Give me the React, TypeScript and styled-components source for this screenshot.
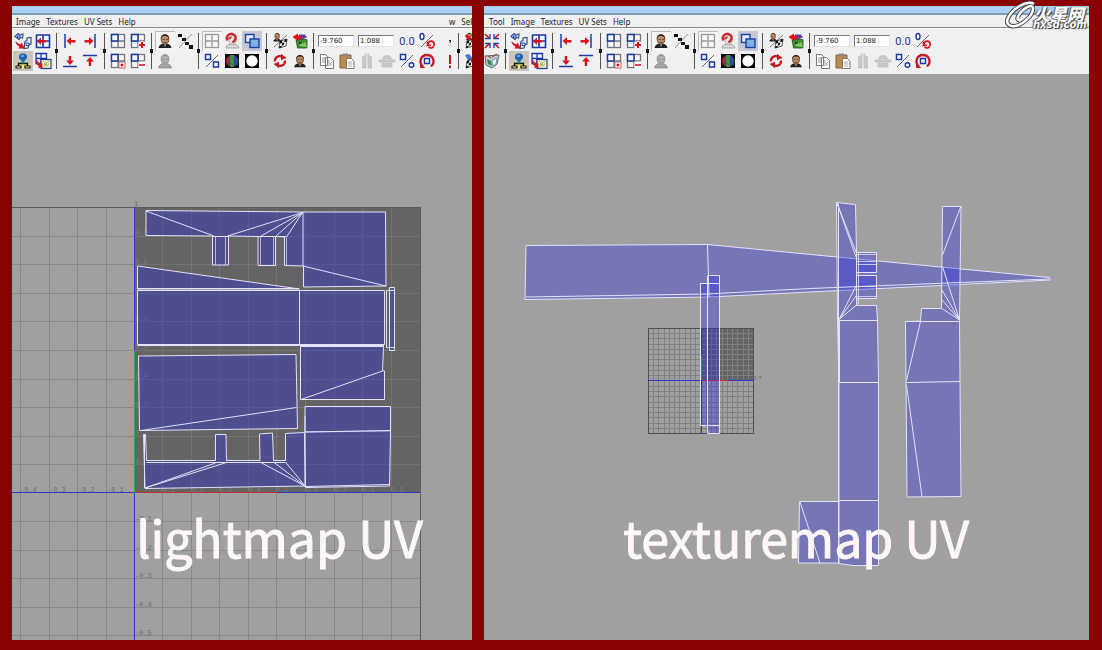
import React from 'react';
import styled, { createGlobalStyle } from 'styled-components';

const GlobalStyle = createGlobalStyle`
  body { margin: 0; background: #8b0000; }
  * { box-sizing: border-box; }
`;

const Page = styled.main`
  display: grid;
  grid-template-columns: 460fr 605fr;
  gap: 12px;
  height: 100vh;
  padding: 6px 13px 10px 12px;
  background: #8b0000;
  position: relative;
  font-family: "Noto Sans", "Open Sans", sans-serif;
`;

const Panel = styled.section`
  display: flex;
  flex-direction: column;
  min-width: 0;
  min-height: 0;
  overflow: hidden;
  background: #f0f0f0;
`;

const TitleStrip = styled.div`
  flex: none;
  height: 9px;
  background: #a9d0f9;
  border-bottom: 2px solid #7f9dbb;
`;

const MenuBar = styled.nav<{ $inset: number }>`
  flex: none;
  display: flex;
  align-items: center;
  gap: 6px;
  height: 13px;
  padding-top: 1px;
  padding-left: ${(p) => p.$inset}px;
  border-bottom: 1px solid #8a8a8a;
  overflow: hidden;
`;

const MenuItem = styled.button`
  flex: none;
  padding: 0;
  border: 0;
  background: none;
  color: #1c1c1c;
  font: 8px/11px "Noto Sans", "Open Sans", sans-serif;
`;

const MenuTail = styled.div`
  display: flex;
  gap: 6px;
  width: 23px;
  margin-left: auto;
  overflow: hidden;
`;

const ToolBar = styled.div`
  flex: none;
  display: flex;
  height: 46px;
  padding: 2px 0 4px;
  border-top: 1px solid #fafafa;
  overflow: hidden;
`;

const Group = styled.div<{ $cols: number }>`
  flex: none;
  display: grid;
  grid-template-columns: repeat(${(p) => p.$cols}, 20px);
  grid-template-rows: 20px 20px;
`;

const Clip = styled.div<{ $width: number; $end?: boolean }>`
  flex: none;
  display: flex;
  width: ${(p) => p.$width}px;
  justify-content: ${(p) => (p.$end ? 'flex-end' : 'flex-start')};
  overflow: hidden;
`;

const Tail = styled.div`
  display: flex;
  margin-left: auto;
`;

const Divider = styled.div<{ $width: number }>`
  flex: none;
  display: flex;
  align-items: center;
  justify-content: center;
  width: ${(p) => p.$width}px;
  background: linear-gradient(#555, #555) center / 1px 36px no-repeat;
  &::after {
    content: "";
    width: 3px;
    height: 4px;
    background: #111;
  }
`;

const Tool = styled.button<{ $frame?: 'light' | 'blue' | 'beige' }>`
  display: block;
  width: 20px;
  height: 20px;
  padding: 0;
  border: 0;
  background: ${(p) =>
    p.$frame === 'blue' ? '#c5c9d6' : p.$frame === 'light' ? '#f5f5f5' : p.$frame === 'beige' ? '#c9c5bd' : 'none'};
  box-shadow: ${(p) => (p.$frame === 'light' ? 'inset 1px 1px 0 #b8b8b8' : 'none')};
  svg { display: block; width: 20px; height: 20px; }
`;

const Field = styled.input`
  grid-column: span 2;
  align-self: center;
  width: 36px;
  height: 12px;
  margin: 0 1px;
  padding: 0 1px;
  border: 1px solid #e4e4e4;
  border-top-color: #777;
  border-left-color: #777;
  background: #fff;
  color: #222;
  font: 7px/10px "DejaVu Sans", sans-serif;
`;

const Canvas = styled.figure`
  position: relative;
  flex: 1;
  min-height: 0;
  margin: 0;
  background: #a0a0a0;
  overflow: hidden;
  > svg { display: block; width: 100%; height: 100%; }
`;

const Caption = styled.figcaption<{ $left: number }>`
  position: absolute;
  left: ${(p) => p.$left}%;
  bottom: 72px;
  color: #fff6f8;
  font: 50px/64px "Noto Sans CJK SC", sans-serif;
  -webkit-text-stroke: 1px #fff6f8;
  white-space: nowrap;
`;

const Brand = styled.div`
  position: absolute;
  top: 0;
  right: 13px;
  display: flex;
  width: 84px;
  height: 30px;
  color: #fff;
  > svg { flex: none; width: 32px; height: 30px; }
`;

const BrandText = styled.div`
  display: flex;
  flex-direction: column;
  padding-top: 7px;
  margin-left: -4px;
  font-family: "Noto Sans CJK SC", sans-serif;
  font-style: italic;
  font-weight: 900;
  text-shadow: 1px 1px 1px #333, 0 0 1px #333, -1px 0 1px #666;
`;

const BrandName = styled.span`
  font-size: 17px;
  line-height: 13px;
`;

const BrandUrl = styled.span`
  font: italic bold 10px/9px "DejaVu Sans", sans-serif;
`;

/* ---------- toolbar icons, drawn on a 20 x 20 field ---------- */

const NAVY = '#1c3aa0';
const RED = '#d8141c';

const Slash = () => <path d="M4 16 16 4" stroke="#666" strokeWidth="1" />;

const Face = ({ grey = false, x = 0, y = 0, s = 1 }: { grey?: boolean; x?: number; y?: number; s?: number }) => (
  <g transform={`translate(${x} ${y}) scale(${s})`}>
    <path d="M3.500 17c.5-3 2-3.500 4.500-4.500h4c2.500 1 4 1.500 4.500 4.500z" fill={grey ? '#a2a2a2' : '#1d1f21'} stroke={grey ? '#888' : 'none'} strokeWidth=".7" />
    <path d="M8 12h4l-2 4z" fill={grey ? '#b5b5b5' : '#cfa07a'} />
    <ellipse cx="10" cy="8.500" rx="3.800" ry="4.800" fill={grey ? '#b0b0b0' : '#c18d66'} stroke={grey ? '#858585' : '#4a2c1a'} strokeWidth=".8" />
    <path d="M5.800 8C5 2 15 2 14.200 8c-1-3-2-3-4.200-3s-3.500 0-4.200 3z" fill={grey ? '#999' : '#23150f'} />
    <path d="M7.500 8.500h2M10.800 8.500h2M8.500 11.500h3" stroke={grey ? '#8c8c8c' : '#4d2a1a'} strokeWidth=".8" />
  </g>
);

const Window = ({ children, grey = false }: { children?: React.ReactNode; grey?: boolean }) => (
  <>
    <rect x="3.500" y="3.500" width="13" height="13" fill="#f7f7f7" stroke={grey ? '#999' : '#70757d'} strokeWidth="1.300" />
    <path d="M10 3.500v13M3.500 10h13" stroke={grey ? '#999' : '#70757d'} strokeWidth="1.300" />
    {!grey && <rect x="3.500" y="3.500" width="6.500" height="6.500" fill="#f4f7ff" stroke={NAVY} strokeWidth="1.500" />}
    {children}
  </>
);

const Checks = ({ x, y, tint = '#111' }: { x: number; y: number; tint?: string }) => (
  <g transform={`translate(${x} ${y})`}>
    <path d="M1 2 8 0 7 7 0 9z" fill="#fff" stroke={tint} strokeWidth=".7" />
    <path d="M1 2l2.300-.7L3 4 .7 4.700zM5.500.700 8 0l-.3 2.500L5.200 3.300zM3 4l2.200-.7L5 6l-2.300.7zM.5 7 2.700 6.700 2.300 8.500 0 9z" fill={tint} />
  </g>
);

const ArrowH = ({ flip = false }: { flip?: boolean }) => (
  <g transform={flip ? 'translate(20 0) scale(-1 1)' : undefined}>
    <path d="M5 3v14" stroke={NAVY} strokeWidth="1.500" />
    <path d="M6.500 10 11 6v3h4.500v2.400H11V14z" fill={RED} />
  </g>
);

const ArrowV = ({ flip = false }: { flip?: boolean }) => (
  <g transform={flip ? 'translate(0 20) scale(1 -1)' : undefined}>
    <path d="M3 15.500h14" stroke={NAVY} strokeWidth="1.500" />
    <path d="M10 14 6 9.500h2.800V5h2.400v4.500H14z" fill={RED} />
  </g>
);

const Cycle = () => (
  <>
    <path d="M5 10.500C4.500 6 9 4 12.500 6" fill="none" stroke="#c51a22" strokeWidth="2.300" />
    <path d="M11 2.800 16.500 7 11 9.300zM9 17.200 3.500 13 9 10.700z" fill="#c51a22" />
    <path d="M15 9.500C15.500 14 11 16 7.500 14" fill="none" stroke="#c51a22" strokeWidth="2.300" />
  </>
);

const ICONS: Record<string, React.ReactNode> = {
  rotate: (
    <>
      <path d="m2 5.500 3-3 2 1.500 3-1-.5 4-2-.5-1.500 2zM12 10.500l2-1V7l4-.5V13l-2 .5-1 3.500-4 .5z" fill="#e6efff" stroke="#2f5092" strokeWidth="1.200" />
      <path d="M13 12h3v2.500h-3zM4.500 5h2.500v2H4.500z" fill="#fff" stroke={NAVY} strokeWidth=".9" />
      <path d="M2.500 10c0 3 2 4.500 4 5.500l-1 2 6.500 0-3.500-6-1.200 2c-2-1-3-1.500-4.800-3.500z" fill={RED} />
    </>
  ),
  flipGrid: (
    <>
      <path d="M3.500 4h13v12.500h-13zM10 4v12.500M3.500 10h13" fill="#eef3ff" stroke={NAVY} strokeWidth="1.600" />
      <path d="M4 10.200 8 6.500V9h5v2.400H8V14z" fill={RED} />
    </>
  ),
  tree: (
    <>
      <path d="M2 12.500h16v5H2z" fill="#f2ec7a" />
      <path d="M10 8v5M5.500 15v-2.500h9V15" fill="none" stroke="#111" strokeWidth="1.600" />
      <path d="M6 4.500 8 2.500h4l2 2v3l-3 2.500H9L6 7.500z" fill="#2263b4" /><path d="M8 4h3v2H8z" fill="#5f9fe4" />
      <path d="M8.500 9.500h3v3h-3z" fill="#1a8a78" />
      <path d="M3 15h5v2H3zM12 15h5v2h-5z" fill="#fff" stroke="#111" strokeWidth="1.200" />
    </>
  ),
  layout: (
    <>
      <path d="M3 2.500h10.500v10H3zM8 2.500v10M3 7.500h10.500" fill="#eef3ff" stroke={NAVY} strokeWidth="1.300" />
      <rect x="8" y="8.500" width="10" height="9" fill="#fbf7c4" stroke={NAVY} strokeWidth="1.200" />
      <path d="m10 10 6 6m0-6-6 6M13 9.500v7M9 13h8" stroke="#8d8340" strokeDasharray="1 1" />
      <path d="m3 10 1 4 2 1-1 2 5-.5-2-5-1.500 1.500L4 9z" fill={RED} />
    </>
  ),
  left: <ArrowH />,
  right: <ArrowH flip />,
  down: <ArrowV />,
  up: <ArrowV flip />,
  win: <Window />,
  winAdd: <Window><path d="M10.500 10.500h7v7h-7z" fill="#fff" /><path d="M14 11v6M11 14h6" stroke={RED} strokeWidth="2" /></Window>,
  winDot: <Window><path d="M11 11h6v6h-6z" fill="#fff" stroke="#c66" /><circle cx="14" cy="14" r="1.500" fill={RED} /></Window>,
  winSub: <Window><path d="M10.500 10.500h7v7h-7z" fill="#fff" /><path d="M11 14h6" stroke={RED} strokeWidth="1.600" /></Window>,
  winGrey: <Window grey />,
  face: <Face />,
  faceSmall: <Face x={1} y={1} s={0.9} />,
  faceGrey: <Face grey />,
  pixels: (
    <>
      <path d="M4 17 17 3" stroke="#999" />
      <path d="M3 3h4v3H3zM7 7h4v3H7zM10 11h4v3h-4zM14 14h4v4h-4z" fill="#111" />
    </>
  ),
  magnet: (
    <>
      <path d="M4 17c0-3 3-3.500 5-4h3c2 .5 4.500 1 5 4z" fill="#d9d9d9" stroke="#999" strokeWidth=".8" />
      <ellipse cx="10.500" cy="9" rx="3.500" ry="4.500" fill="#e3e0dc" stroke="#aaa" strokeWidth=".8" />
      <path d="M5.500 9.500C3 5 8 1.500 11.500 3.500c3.500 2 2.500 6-1 8" fill="none" stroke="#cf262e" strokeWidth="2.400" />
      <path d="m6.500 8 3-2" stroke="#cf262e" strokeWidth="1.600" />
    </>
  ),
  overlap: (
    <>
      <rect x="3.500" y="3.500" width="8.500" height="8" fill="#dfe9fb" stroke={NAVY} strokeWidth="1.400" />
      <rect x="8" y="8" width="9" height="8.500" fill="#7fb0ea" stroke={NAVY} strokeWidth="1.400" />
    </>
  ),
  ratio: (
    <>
      <Slash />
      <path d="M3.500 3.500h5v5h-5zM11.500 11h5v5h-5z" fill="#fff" stroke={NAVY} strokeWidth="1.500" />
    </>
  ),
  rgb: (
    <>
      <path d="M3 3h14v14H3z" fill="#0b0b12" />
      <path d="M9 4.500C2 6 2 14 9 15.500z" fill="#8b3438" /><path d="M8 4h4v12H8z" fill="#3c8a48" /><path d="M12 4.500c6 1.500 6 9.500 0 11z" fill="#2f4c8c" />
    </>
  ),
  mask: <><path d="M3 3h14v14H3z" fill="#050505" /><circle cx="10" cy="10" r="5.700" fill="#fff" /></>,
  faceChecks: <><Face x={1} y={0} s={0.62} /><path d="M4 16 17 4" stroke="#777" /><Checks x={9} y={8} /></>,
  bake: (
    <>
      <path d="M9 3.500h6l2 3-5 2-3-2z" fill="#6b3aa0" />
      <path d="M6 8.500h11v8.500H7.500z" fill="#3c8f35" stroke="#145a1e" strokeWidth=".8" />
      <path d="m9 15 3-4 2 2 1-3 2 6z" fill="#93c46a" /><path d="M9 11h3v1.500H9z" fill="#123f1a" />
      <path d="M2.500 6 8 2.500v2l3 1v3H8v1.500z" fill={RED} />
    </>
  ),
  cycle: <Cycle />,
  zeros: <text x="10" y="14" textAnchor="middle" fontFamily="Roboto, 'Liberation Sans', sans-serif" fontSize="11" fill={NAVY}>0.0</text>,
  resetRatio: (
    <>
      <Slash /><ellipse cx="5" cy="5.500" rx="2" ry="3" fill="none" stroke={NAVY} strokeWidth="1.400" />
      <path d="M10.500 10.500v3.800h3.500M11 13c1-5 7-3 6 1.500-.8 3-4 3-5.500 1.500" fill="none" stroke={RED} strokeWidth="1.700" />
    </>
  ),
  copy: (
    <>
      <path d="M3.500 3.500h5l2 2v9h-7zM8.500 6.500h5l3 3v8h-8z" fill="#fff" stroke="#777" />
      <path d="M5 7h3M5 9h3M5 11h3M10 10h3M10 12h5M10 14h5" stroke="#999" />
    </>
  ),
  paste: (
    <>
      <path d="M3 4h11v13H3z" fill="#b98a52" stroke="#8a6335" /><path d="M6 2.500h5v3H6z" fill="#888" />
      <path d="M9.500 7.500h5l2.500 3v7H9.500z" fill="#fff" stroke="#777" /><path d="M11 11h4M11 13h4M11 15h4" stroke="#aaa" />
    </>
  ),
  mirrorH: <path d="M9 2.500V17H5.500V6L9 4zM11 2.500V17h3.500V6L11 4z" fill="#c9c9c9" stroke="#bbb" strokeWidth=".7" />,
  mirrorV: <path d="M5.500 7.500c1-4 8-4 9 0v.5h-9zM2 9h16v2H2zM5 12h10v4H5z" fill="#c9c9c9" stroke="#bbb" strokeWidth=".7" />,
  squareRound: (
    <>
      <Slash /><path d="M3.500 3.500h5v5h-5z" fill="#fff" stroke={NAVY} strokeWidth="1.500" />
      <circle cx="14.500" cy="14" r="2.300" fill="#fff" stroke={NAVY} strokeWidth="1.400" />
    </>
  ),
  spin: (
    <>
      <path d="M6 15.500C1 11 4 4 10 4s9 7 4 11.500" fill="none" stroke="#c51a22" strokeWidth="2.300" />
      <path d="M3 12.500 8.500 17H3z" fill="#c51a22" /><path d="M7.500 7.500h5v5h-5z" fill="#dfe9fb" stroke={NAVY} strokeWidth="1.400" />
    </>
  ),
  burst: (
    <>
      <path d="M3 3l4.500 4.500M17 3l-4.500 4.500M3 17l4.500-4.500M17 17l-4.500-4.500" stroke={RED} strokeWidth="1.700" />
      <path d="M8 3v4.500H3M12 3v4.500h5M8 17v-4.500H3M12 17v-4.500h5" fill="none" stroke={NAVY} strokeWidth="1.300" />
    </>
  ),
  bucket: (
    <>
      <path d="M3 5 17 4l-2 9-5 4-6-3z" fill="#b9cfd6" stroke="#4c6e72" />
      <path d="m5 8 4 2 1 5-4-2z" fill="#3b8047" /><path d="m10 9 5-2-1 6-3 2z" fill="#e8f0f5" stroke="#55799a" strokeWidth=".7" />
      <path d="m10 6 5-3M6 5l3 2" stroke="#b8433f" strokeWidth="1.400" />
    </>
  ),
  checksRed: <><Face x={2} y={0} s={0.55} /><path d="m4 4 4 5" stroke={RED} strokeWidth="3" /><Checks x={4} y={8} /></>,
  checksBlue: <><path d="m3 4 4-1 5 6-5 2z" fill="#3f78c3" /><Checks x={4} y={8} /><path d="m11 4 3-1" stroke="#2a7050" strokeWidth="2" /></>,
  tick: <path d="M15 9.500h1.500v1.500l-1 1" fill="none" stroke="#111" strokeWidth="1" />,
  bang: <path d="M16 4v9M16 14.500v2.500" stroke="#b8171f" strokeWidth="2" />,
};

type ToolSpec = [icon: string, label: string, frame?: 'light' | 'blue' | 'beige'];

const Icon = ({ spec: [icon, label, frame] }: { spec: ToolSpec }) => (
  <Tool type="button" aria-label={label} $frame={frame}>
    <svg viewBox="0 0 20 20" aria-hidden="true">{ICONS[icon]}</svg>
  </Tool>
);

const GROUPS: { cols: number; gap: number; tools: ToolSpec[] }[] = [
  { cols: 2, gap: 7, tools: [['rotate', 'Rotate shells'], ['flipGrid', 'Flip'], ['tree', 'Unfold', 'beige'], ['layout', 'Layout']] },
  { cols: 2, gap: 8, tools: [['left', 'Align left'], ['right', 'Align right'], ['down', 'Align bottom'], ['up', 'Align top']] },
  { cols: 2, gap: 7, tools: [['win', 'Isolate'], ['winAdd', 'Isolate add'], ['winDot', 'Isolate reset'], ['winSub', 'Isolate remove']] },
  { cols: 2, gap: 7, tools: [['face', 'Show image', 'light'], ['pixels', 'Pixel snap'], ['faceGrey', 'Dim image']] },
  {
    cols: 3, gap: 8, tools: [['winGrey', 'Show grid', 'light'], ['magnet', 'Snap'], ['overlap', 'Shade shells', 'blue'],
      ['ratio', 'Image ratio'], ['rgb', 'RGB channels'], ['mask', 'Alpha channel']],
  },
  { cols: 2, gap: 7, tools: [['faceChecks', 'Toggle texture'], ['bake', 'Bake'], ['cycle', 'Update'], ['faceSmall', 'Use image']] },
];

const Tools = () => (
  <>
    {GROUPS.map((g, i) => (
      <React.Fragment key={i}>
        <Group $cols={g.cols}>{g.tools.map((t) => <Icon key={t[1]} spec={t} />)}</Group>
        <Divider $width={g.gap} />
      </React.Fragment>
    ))}
    <Group $cols={6}>
      <Field aria-label="U coordinate" defaultValue="-9.760" />
      <Field aria-label="V coordinate" defaultValue="1.088" />
      <Icon spec={['zeros', 'Refresh values']} />
      <Icon spec={['resetRatio', 'Reset ratio']} />
      <Icon spec={['copy', 'Copy']} />
      <Icon spec={['paste', 'Paste']} />
      <Icon spec={['mirrorH', 'Paste U']} />
      <Icon spec={['mirrorV', 'Paste V']} />
      <Icon spec={['squareRound', 'Copy mode']} />
      <Icon spec={['spin', 'Cycle UVs']} />
    </Group>
  </>
);

const MENUS = ['Image', 'Textures', 'UV Sets', 'Help'];

/* ---------- UV drawings ---------- */

const SHELL = 'rgba(37,37,230,.333)';
const EDGE = '#e2e2fa';
const range = (n: number) => Array.from({ length: n }, (_, i) => i);

const LightmapDrawing = () => (
  <svg viewBox="12 74 460 566" preserveAspectRatio="xMinYMin slice" role="img" aria-label="Lightmap UV layout">
    <rect x="134" y="207" width="286" height="286" fill="#646464" />
    <g stroke="#888" strokeWidth="1" shapeRendering="crispEdges">
      {range(4).map((i) => <path key={i} d={`M${Math.round(20 + i * 28.6)}.5 207V640`} />)}
      {range(9).map((i) => <path key={i} d={`M${Math.round(162 + i * 28.6)}.5 493V640`} />)}
      {range(9).map((i) => <path key={i} d={`M12 ${Math.round(235.600 + i * 28.6)}.5H134`} />)}
      {range(5).map((i) => <path key={i} d={`M12 ${Math.round(521 + i * 28.6)}.5H420`} />)}
    </g>
    <g stroke="#737373" shapeRendering="crispEdges">
      {range(9).map((i) => <path key={i} d={`M${Math.round(162 + i * 28.6)}.5 208V493M134 ${Math.round(235.600 + i * 28.6)}.5H420`} />)}
    </g>
    <path d="M12 207.500H420.500V640" fill="none" stroke="#5c5c5c" shapeRendering="crispEdges" />
    <g fontFamily="'Liberation Mono', monospace" fontSize="7" fill="#6c6c6c">
      {['4', '3', '2', '1'].map((n, i) => <text key={n} x={20 + i * 29} y="492">-0.{n}</text>)}
      {['1', '2', '3', '4', '5'].map((n, i) => <text key={n} x="135" y={Math.round(521 + i * 28.6)}>-0.{n}</text>)}
      <text x="134" y="206">1</text>
      <g fill="#7b7b7b">
        {range(9).map((i) => <text key={i} x={Math.round(162 + i * 28.6)} y="492">0.{i + 1}</text>)}
        {range(9).map((i) => <text key={i} x="135" y={Math.round(235 + i * 28.6)}>0.{9 - i}</text>)}
      </g>
      <text x="418" y="492">1</text>
    </g>
    <g strokeWidth="1" shapeRendering="crispEdges">
      <path d="M134.500 207V350M134.500 493V640M12 492.500H134M277 492.500H420" stroke="#3434c4" />
      <path d="M134.500 350V493" stroke="#2fae3a" />
      <path d="M135 492.500H277" stroke="#c62f2f" />
    </g>
    <g fill={SHELL} stroke={EDGE} strokeLinejoin="round">
      <path d="M146 210.500 302.500 212H385.500L386 286 303.500 287V266L284.500 265.500V237L275.500 236.500V265.500H258V236.500L228.500 236V265H212.500V236L146 235.500z" />
      <path d="M137.500 266 299.500 289H137.500z" />
      <path d="M137.500 290.500H299.500V344.500H137.500z" />
      <path d="M299.500 290.500H384.500V344.500H299.500z" />
      <path d="M389.500 287.500H394.500V350.500H389.500z" />
      <path d="M300.500 346.500H383.500L382.500 371H384.500V399.500H300.500z" />
      <path d="M138.500 356 296 354.500 297.500 428.500 139.500 430.500z" />
      <path d="M305 406.500H390.500V431L305 432z" />
      <path d="M305 432 390.500 430.500 389.500 486 305.500 487.500z" />
      <path d="M143.500 434.500H145.500L146.500 460.500H215.500V434.500H226L226.500 460.500H260L259.500 434 272.500 433 273.500 460.500H285.500V433.500L304.500 432.500 305 486 145 488.500z" />
    </g>
    <g fill="none" stroke={EDGE}>
      <path d="m146 211 68 25M302.500 212.500 227.500 236M302.500 212.500 261 236M302.500 212.500 275.500 236.500M302.500 212.500 286.500 237M303 212V266L386 286" />
      <path d="M212 236.500H228M258 236.500H286" />
      <path d="M215.500 236V265M225.500 236V265M260.500 236V265M273.500 236V265M286.500 237V265" strokeOpacity=".7" />
      <path d="M137.500 288.500H299M137.500 345.500H384M386.500 290.500H394M386.500 290.500V347.500H394.500" />
      <path d="M301 399.500 382.500 371M141 430.500 296.500 407.500M305.500 486.500 389.500 484.500M305 416V432" />
      <path d="M146.500 462.500H285.500M145 488 215.500 463M145 488 226.500 462.500M305 486 260 462M305 486 273.500 462M305 486 285.500 462M144.500 435V488" />
    </g>
  </svg>
);

const TexturemapDrawing = () => (
  <svg viewBox="484 74 605 566" preserveAspectRatio="xMinYMin slice" role="img" aria-label="Texture map UV layout">
    <rect x="701" y="328" width="53" height="53" fill="#646464" />
    <g stroke="#808080" strokeWidth="1">
      {range(19).map((i) => (
        <path key={i} d={`M${Math.round(653 + i * 5.27)}.5 328V434M648 ${Math.round(333 + i * 5.27)}.5H754`} />
      ))}
    </g>
    <rect x="648.500" y="328.500" width="105" height="105" fill="none" stroke="#4f4f4f" />
    <g fontFamily="'Liberation Mono', monospace" fontSize="6" fill="#666">
      {range(9).map((i) => <text key={i} x={Math.round(649 + i * 5.27)} y="380">-</text>)}
      {range(10).map((i) => <text key={i} x={Math.round(706 + i * 5.27)} y="380">{(i + 1) % 10}</text>)}
      <text x="758" y="380">?</text>
    </g>
    <g strokeWidth="1" shapeRendering="crispEdges">
      <path d="M701.500 328V434M648 380.500H701M728 380.500H754" stroke="#3434d4" />
      <path d="M701.500 355V380" stroke="#2fae3a" />
      <path d="M702 380.500H728" stroke="#d62f2f" />
    </g>
    <g fill={SHELL} stroke={EDGE} strokeLinejoin="round">
      <path d="M526 245.500 707.500 244.500 780 251.500 1049.500 277.500 1050 280 780 293.500 709 297 525 299.500z" />
      <path d="M700.500 283.500H707.500V425.500H700.500z" />
      <path d="M707.500 275.500H719.500V433.500H707.500z" />
      <path d="M836.500 202.500 855.500 204.500 856.500 252V305.500H876.500L877.500 320 878.500 382V565.500H853L839 563.500V382L837.500 320z" />
      <path d="M856.500 252.500H876.500V272.500H856.500z" />
      <path d="M856.500 275.500H876.500V298.500H856.500z" />
      <path d="M799.500 501.500H838.500V563H798.500z" />
      <path d="M942.500 206.500H961L959.500 320 961 496.500 907 497 905.500 321.500 920.500 321 921.500 308.500H941.500z" />
    </g>
    <g fill="none" stroke={EDGE}>
      <path d="M707.500 245 709 297M526 297 707 294 810 288.500 1049 279M700.500 283.500H720M700.500 425.500H720" />
      <path d="M837 203 856 252M837 203 856 257M839 319.500 856 286M839 319.500 856 296M839 319.500 856 305.500M838 320.500H877.500M839 382.500H878.500M839 500.500H878.500M838.500 204V563M839.500 320V382" />
      <path d="M856.500 254.500H876.500M856.500 261.500H876.500M856.500 264.500H876.500M856.500 286.500H876.500M856.500 296.500H876.500M858.500 252V304" strokeOpacity=".8" />
      <path d="M800 502 820 563M961 206 942.500 255M942.500 266.500 959.500 320M942 290 959.500 320M942 300 959.500 320M942 308.500 959.500 320M906 321.500H959.500M920.500 321.500 906.500 380.500M906.500 382.500 960 381.500M906.500 385 922 496.500" />
    </g>
  </svg>
);

export default function App() {
  return (
    <>
      <GlobalStyle />
      <Page>
        <Panel>
          <TitleStrip />
          <MenuBar $inset={4}>
            {MENUS.map((m) => <MenuItem key={m}>{m}</MenuItem>)}
            <MenuTail><MenuItem>w</MenuItem><MenuItem>Sel</MenuItem></MenuTail>
          </MenuBar>
          <ToolBar>
            <Clip $width={1} />
            <Tools />
            <Tail>
              <Clip $width={8} $end>
                <Group $cols={1}><Icon spec={['tick', 'Options']} /><Icon spec={['bang', 'Alert']} /></Group>
              </Clip>
              <Divider $width={8} />
              <Clip $width={10}>
                <Group $cols={1}><Icon spec={['checksRed', 'Texture A']} /><Icon spec={['checksBlue', 'Texture B']} /></Group>
              </Clip>
            </Tail>
          </ToolBar>
          <Canvas>
            <LightmapDrawing />
            <Caption $left={27}>lightmap UV</Caption>
          </Canvas>
        </Panel>
        <Panel>
          <TitleStrip />
          <MenuBar $inset={5}>
            <MenuItem>Tool</MenuItem>
            {MENUS.map((m) => <MenuItem key={m}>{m}</MenuItem>)}
          </MenuBar>
          <ToolBar>
            <Clip $width={18} $end>
              <Group $cols={1}><Icon spec={['burst', 'Spread']} /><Icon spec={['bucket', 'Fill']} /></Group>
            </Clip>
            <Divider $width={7} />
            <Tools />
          </ToolBar>
          <Canvas>
            <TexturemapDrawing />
            <Caption $left={23}>texturemap UV</Caption>
          </Canvas>
        </Panel>
        <Brand>
          <svg viewBox="0 0 32 30" aria-hidden="true">
            <path d="M29 4C22 0 8 8 3 18c-3 7 3 10 11 7 8-4 14-11 14-16 0-5-6-3-11 2-4 4-6 9-3 9" fill="none" stroke="#444" strokeWidth="4.500" />
            <path d="M29 4C22 0 8 8 3 18c-3 7 3 10 11 7 8-4 14-11 14-16 0-5-6-3-11 2-4 4-6 9-3 9" fill="none" stroke="#fff" strokeWidth="2.500" />
          </svg>
          <BrandText>
            <BrandName>火星网</BrandName>
            <BrandUrl>hxsd.com</BrandUrl>
          </BrandText>
        </Brand>
      </Page>
    </>
  );
}
